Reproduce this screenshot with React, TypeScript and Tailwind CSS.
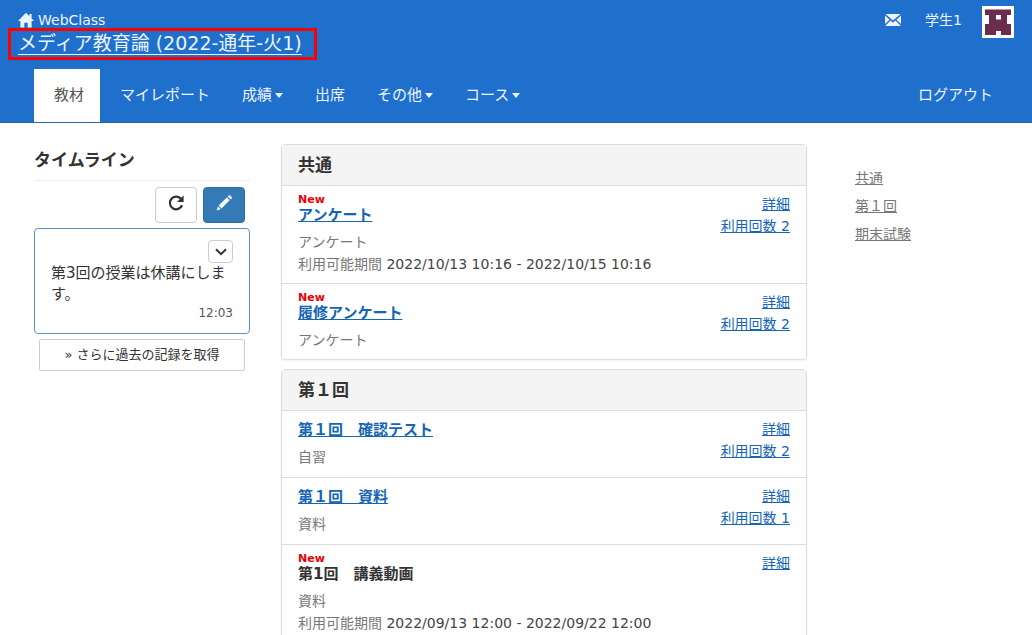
import { twMerge } from "tailwind-merge";

interface Material {
    id: number,
    title: string,
    category: string,
    isNew?: boolean,
    linked?: boolean,
    period?: string,
    count?: number,
}

interface Section {
    id: string,
    name: string,
    items: Material[],
}

const sections: Section[] = [
    {
        id: "common",
        name: "共通",
        items: [
            { id: 1, title: "アンケート", category: "アンケート", isNew: true, linked: true, period: "2022/10/13 10:16 - 2022/10/15 10:16", count: 2 },
            { id: 2, title: "履修アンケート", category: "アンケート", isNew: true, linked: true, count: 2 },
        ],
    },
    {
        id: "lesson1",
        name: "第１回",
        items: [
            { id: 3, title: "第１回　確認テスト", category: "自習", linked: true, count: 2 },
            { id: 4, title: "第１回　資料", category: "資料", linked: true, count: 1 },
            { id: 5, title: "第1回　講義動画", category: "資料", isNew: true, period: "2022/09/13 12:00 - 2022/09/22 12:00" },
        ],
    },
];

const tabs = [
    { label: "マイレポート", menu: false },
    { label: "成績", menu: true },
    { label: "出席", menu: false },
    { label: "その他", menu: true },
    { label: "コース", menu: true },
];

const HomeIcon = () => (
    <svg className="w-4 h-4" viewBox="0 0 16 16" fill="currentColor" aria-hidden="true">
        <path d="M8 .8 0 9h2.4v6.6h3.9v-4.8h3.4v4.8h3.9V9H16l-2.4-2.5V2h-2.2v2.3z" />
    </svg>
);

const MailIcon = () => (
    <svg className="w-4 h-3" viewBox="0 0 16 12" fill="currentColor" aria-hidden="true">
        <path d="M.5 0h15L8 6.4zM0 1.6 4.6 5.7 0 10.1zM16 1.6v8.5l-4.6-4.4zM5.6 6.6 8 8.7l2.4-2.1 5 4.8v.6H.6v-.6z" />
    </svg>
);

const RepeatIcon = () => (
    <svg className="w-[18px] h-[18px]" viewBox="0 0 16 16" aria-hidden="true">
        <path d="M12.3 4.2A5.6 5.6 0 1 0 13.4 10" fill="none" stroke="currentColor" strokeWidth="2" />
        <path d="M14.8 1.2v5.9H8.9z" fill="currentColor" />
    </svg>
);

const PencilIcon = () => (
    <svg className="w-4 h-4" viewBox="0 0 16 16" fill="currentColor" aria-hidden="true">
        <path d="M12.6.6a1.2 1.2 0 0 1 1.7 0l1.2 1.2a1.2 1.2 0 0 1 0 1.7l-1 1-2.9-2.9zM10.8 2.4l2.9 2.9-8.2 8.2-2.9-2.9zM1.9 11.4l2.8 2.8L.6 15.5z" />
    </svg>
);

const Avatar = () => (
    <svg className="w-8 h-8 bg-white" viewBox="0 0 32 32" role="img" aria-label="学生1">
        <path d="M3 3.5h26V9h-4v9h4v11H19v-4h-5v4H3V18h4V9H3zM14 9h5v4.5h-5z" fill="#6b2c4e" fillRule="evenodd" />
    </svg>
);

const Caret = () => (
    <span className="ml-[3px] border-x-4 border-t-[5px] border-x-transparent border-t-current" />
);

const MaterialRow: React.FC<{ item: Material }> = ({ item }) => {
    return (
        <li className="flex justify-between border-t border-[#ddd] px-4">
            <div className={twMerge("pt-[11px] pb-[9px]", item.isNew && "pt-[7px] pb-2")}>
                {item.isNew && <p className="text-[11px] leading-[14px] font-bold text-[#ee0000]">New</p>}
                <h3 className="text-[15px] leading-4 font-bold mb-2">
                    {item.linked ? <a href="#" className="text-[#1565b5] underline">{item.title}</a> : item.title}
                </h3>
                <p className="text-[#777]">{item.category}</p>
                {item.period && (
                    <p className="text-[#777]">利用可能期間 <span className="text-[#444]">{item.period}</span></p>
                )}
            </div>
            <div className="flex flex-col items-end pt-[7px] text-[#1565b5] underline">
                <a href="#">詳細</a>
                {item.count && <a href="#">利用回数 {item.count}</a>}
            </div>
        </li>
    )
}

const App: React.FC = () => {
    return (
        <div className="bg-white text-[#333] text-sm leading-[22px] font-['DejaVu_Sans','Noto_Sans_CJK_JP',sans-serif]">
            <header className="bg-[#1f6fcc] text-[#eef4fc] border-b border-[#2b66ab]">
                <div className="flex justify-between items-start pl-2 pr-[18px]">
                    <div className="pt-3">
                        <a href="#" className="flex items-center gap-1 pl-[10px] h-4"><HomeIcon />WebClass</a>
                        <a href="#" className="block h-8 border-[3px] border-[#ff0000] pl-[7px] pr-3 text-[19px] leading-6 underline underline-offset-4">
                            メディア教育論 (2022-通年-火1)
                        </a>
                    </div>
                    <div className="flex items-center pt-[6px]">
                        <a href="#" aria-label="メッセージ" className="mr-6 pb-1"><MailIcon /></a>
                        <a href="#" className="mr-5 pb-1">学生1</a>
                        <Avatar />
                    </div>
                </div>
                <nav className="flex items-center pl-[34px] pr-[39px] pt-[9px] text-[15px] leading-[53px]">
                    <a href="#" className="bg-white text-[#555] pl-5 pr-4 mr-1">教材</a>
                    {tabs.map((tab) => (
                        <a href="#" key={tab.label} className="flex items-center px-4">
                            {tab.label}
                            {tab.menu && <Caret />}
                        </a>
                    ))}
                    <a href="#" className="ml-auto">ログアウト</a>
                </nav>
            </header>

            <div className="flex items-start pl-[34px] pt-[21px]">
                <aside className="w-[216px] shrink-0">
                    <h2 className="text-[17px] leading-8 font-bold pb-1 border-b border-[#eee]">タイムライン</h2>
                    <div className="flex justify-end gap-[6px] pt-[6px] pr-[5px]">
                        <button aria-label="更新" className="flex items-center justify-center w-[42px] h-9 pb-1 border border-[#ccc] rounded-sm"><RepeatIcon /></button>
                        <button aria-label="投稿" className="flex items-center justify-center w-[42px] h-9 pb-1 bg-[#337ab7] border border-[#2e6da4] rounded-sm text-white"><PencilIcon /></button>
                    </div>
                    <article className="mt-[5px] border border-[#5b92c6] rounded-sm px-4 pt-[11px] pb-3">
                        <div className="flex justify-end">
                            <button aria-label="メニュー" className="flex items-center justify-center w-[25px] h-[23px] border border-[#ccc] rounded-sm">
                                <svg className="w-3 h-2" viewBox="0 0 12 8" fill="none" stroke="currentColor" strokeWidth="2" aria-hidden="true">
                                    <path d="m1 1.2 5 5 5-5" />
                                </svg>
                            </button>
                        </div>
                        <p className="text-[15px] leading-[21px]">第3回の授業は休講にします。</p>
                        <p className="text-xs leading-4 text-right text-[#555]">12:03</p>
                    </article>
                    <button className="block w-[206px] h-8 mx-auto mt-[5px] border border-[#ccc] rounded-xs text-[13px]">» さらに過去の記録を取得</button>
                </aside>

                <main className="flex-1 min-w-0 ml-[31px] flex flex-col gap-[9px]">
                    {sections.map((section) => (
                        <section key={section.id} id={section.id} className="border border-[#ddd] rounded-sm shadow-xs">
                            <h2 className="bg-[#f4f4f4] px-4 text-[17px] leading-10 font-bold">{section.name}</h2>
                            <ul>
                                {section.items.map((item) => <MaterialRow key={item.id} item={item} />)}
                            </ul>
                        </section>
                    ))}
                </main>

                <nav className="w-[177px] shrink-0 ml-12 pt-[23px] flex flex-col items-start gap-[6px] text-[#777] underline">
                    <a href="#common">共通</a>
                    <a href="#lesson1">第１回</a>
                    <a href="#exam">期末試験</a>
                </nav>
            </div>
        </div>
    )
}

export default App;
